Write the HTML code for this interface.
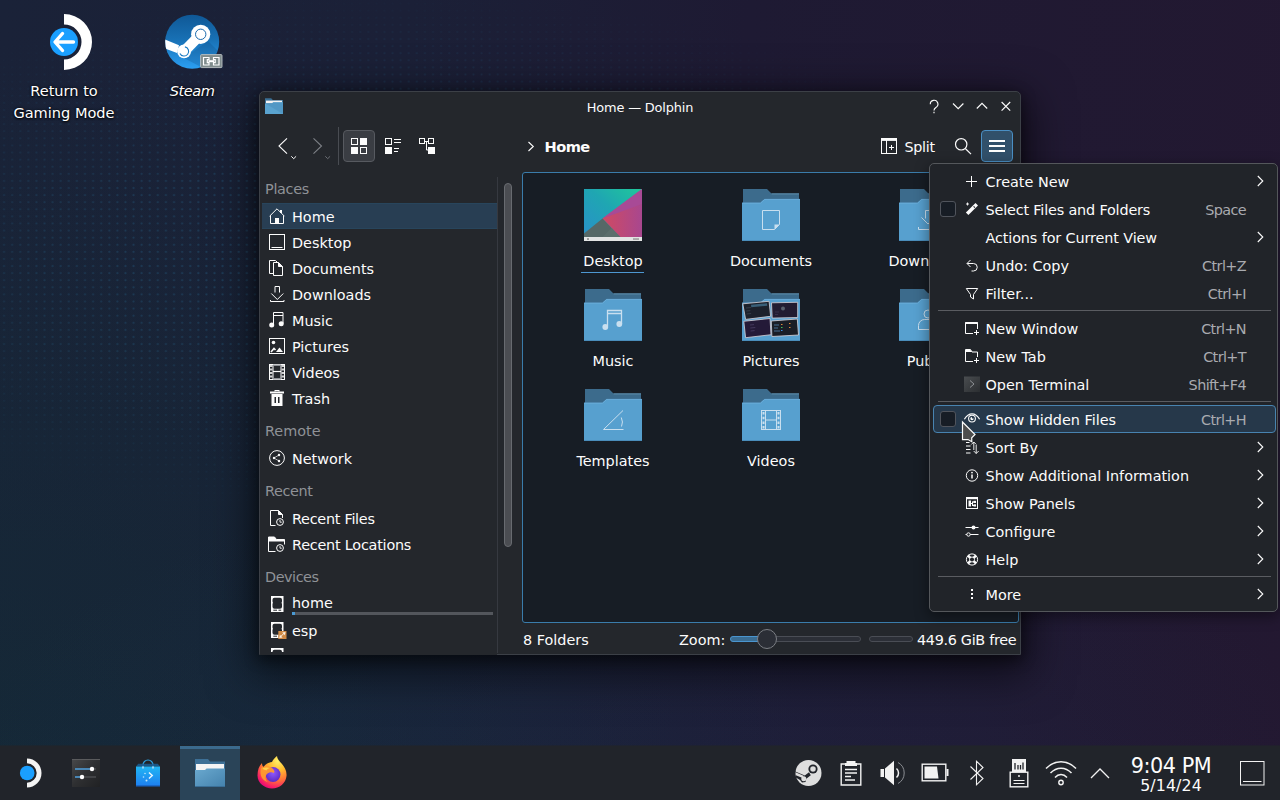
<!DOCTYPE html>
<html lang="en">
<head>
<meta charset="utf-8">
<title>Home — Dolphin</title>
<style>
html,body{margin:0;padding:0}
body{width:1280px;height:800px;overflow:hidden;position:relative;
  font-family:"DejaVu Sans","Liberation Sans",sans-serif;font-size:14.4px;color:#fcfcfc;
  background:#1a2238;-webkit-font-smoothing:antialiased}
*{box-sizing:border-box}
.a{position:absolute}
.t{position:absolute;white-space:nowrap;line-height:16px;height:16px}
svg{position:absolute;overflow:visible}
/* wallpaper */
#wall{left:0;top:0;width:1280px;height:800px;
  background:
   radial-gradient(ellipse 700px 330px at 640px 100%,rgba(25,62,100,.17) 0%,rgba(25,62,100,.1) 55%,rgba(25,62,100,0) 100%),
   radial-gradient(ellipse 800px 760px at 0% 100%,rgba(10,54,52,.34) 0%,rgba(10,54,52,.2) 45%,rgba(10,54,52,0) 100%),
   linear-gradient(96deg,#1a2238 0%,#1b2037 30%,#1e1a33 55%,#231831 100%);}
#dots{left:0;top:0;width:1280px;height:800px;opacity:.7;
  background-image:radial-gradient(circle,rgba(40,110,150,.6) 0.6px,rgba(40,110,150,0) 1.5px);
  background-size:8.1px 7.1px;
  -webkit-mask-image:radial-gradient(ellipse 640px 270px at 380px 255px,#000 0%,rgba(0,0,0,.6) 50%,rgba(0,0,0,0) 100%);
          mask-image:radial-gradient(ellipse 640px 270px at 380px 255px,#000 0%,rgba(0,0,0,.6) 50%,rgba(0,0,0,0) 100%);}
/* desktop icon labels */
.dl{position:absolute;text-align:center;line-height:22px;font-size:14.55px;color:#fff;
  text-shadow:0 1px 2px rgba(0,0,0,.9),0 0 3px rgba(0,0,0,.8)}
/* window */
#win{left:259px;top:91px;width:762px;height:564px;background:#24272c;border:1px solid #3c4047;
  border-radius:5px 5px 0 0;box-shadow:0 12px 44px 8px rgba(0,0,0,.55),0 4px 14px 1px rgba(0,0,0,.45)}
#win .t,#menu .t{color:#fcfcfc}
.hdr{color:#8f9297 !important}
.sel{left:2px;width:235px;height:26px;background:#283e53;border-top:1px solid #28455c;border-bottom:1px solid #28455c}
/* menu */
#menu{left:929px;top:163px;width:349px;height:449px;background:#212429;border:1px solid #54575b;
  border-radius:5px;box-shadow:0 4px 14px 1px rgba(0,0,0,.4)}
#menuc .sc{color:#a9abb0;text-align:right;letter-spacing:-.6px}
.sep{position:absolute;left:8px;width:333px;height:1px;background:#5a5c61}
.cb{position:absolute;width:16px;height:16px;border:1px solid #50545c;border-radius:3px;background:#171d25}
/* panel */
#panel{left:0;top:746px;width:1280px;height:54px;background:#21242a}
</style>
</head>
<body>
<div id="wall" class="a"></div>
<div id="dots" class="a"></div>

<svg style="left:36px;top:13px" width="58" height="58" viewBox="36 13 58 58"><path d="M64 14a28 28 0 0 1 0 56V59.500a17.500 17.500 0 0 0 0-35z" fill="#fff"/><circle cx="64" cy="42" r="14" fill="#1a9fff"/><path d="M73.500 42H56M62.500 33.500L55 42l7.500 8.500" fill="none" stroke="#fff" stroke-width="3.400" stroke-linecap="round" stroke-linejoin="round"/></svg>
<span class="dl" style="left:0;top:80px;width:128px">Return to<br>Gaming Mode</span>
<svg style="left:165px;top:14px" width="58" height="56" viewBox="0 0 58 56"><defs><linearGradient id="st1" x1="0" y1="0" x2="0" y2="1"><stop offset="0" stop-color="#0f5896"/><stop offset=".45" stop-color="#1870b4"/><stop offset="1" stop-color="#2b9ff2"/></linearGradient><clipPath id="stc"><circle cx="27.200" cy="27.800" r="27"/></clipPath></defs><circle cx="27.200" cy="27.800" r="27" fill="url(#st1)"/><g clip-path="url(#stc)"><path d="M43 27l20 20-12 14-32-17z" fill="#0c3f70" opacity=".22"/><path d="M-1 25.200l15 6 -2 7.800-13-4.800z" fill="#fff"/><path d="M35.700 20.300L19.100 37.400" stroke="#fff" stroke-width="10.500"/><circle cx="35.700" cy="20.300" r="9.600" fill="#fff"/><circle cx="19.100" cy="37.400" r="6.900" fill="#fff"/><circle cx="35.700" cy="20.300" r="5.200" fill="none" stroke="#1a6aac" stroke-width="1"/><path d="M19.900 32.900a4.600 4.600 0 1 1-5 6.500" fill="none" stroke="#1c7cc4" stroke-width="1.100"/></g><rect x="35.600" y="40.600" width="21.400" height="13" rx="1" fill="#7f8c8d" stroke="#bcc3c5" stroke-width=".9"/><path d="M38.500 43.500h5.500v2.200h-1.700v3h1.700v2.300h-5.500zM54 43.500h-5.500v2.200h1.700v3h-1.700v2.300H54z" fill="none" stroke="#fff" stroke-width="1.200"/><path d="M43.500 47.200h5.500" stroke="#fff" stroke-width="2"/></svg>
<span class="dl" style="left:128px;top:80px;width:128px;font-style:italic;letter-spacing:-.45px">Steam</span>

<div id="win" class="a"></div>
<div id="winc" class="a" style="left:0;top:0;width:1280px;height:655px;overflow:hidden">
<!-- titlebar -->
<svg style="left:265px;top:97px" width="18" height="17" viewBox="0 0 18 17">
  <path d="M0 1.2h6.2l1.6 1.8H18v3H0z" fill="#3a6f94"/>
  <rect x="1" y="3.6" width="16" height="3" fill="#f2f2f2"/>
  <path d="M0 6.2h7.2l1-1H18V17H0z" fill="#5aa3cf"/>
  <path d="M0 6.2h7.2l1-1H18V17z" fill="#4a8fbd" opacity=".55"/>
</svg>
<span class="t" style="left:580px;top:100px;width:120px;text-align:center;font-size:12.9px;letter-spacing:-.15px">Home — Dolphin</span>
<svg style="left:926px;top:98px" width="90" height="18" viewBox="926 98 90 18" fill="none" stroke="#fcfcfc" stroke-width="1.15">
  <path d="M930.3 104.2a3.8 3.8 0 1 1 5.6 3.2c-1.3.8-1.9 1.500-1.9 3"/>
  <path d="M934 111.800v1.4"/>
  <path d="M953 103.500l5.200 5.200 5.200-5.200"/>
  <path d="M976.800 108.500l5.200-5.200 5.200 5.200"/>
  <path d="M1001.600 102l8.600 8.600M1010.200 102l-8.600 8.600"/>
</svg>
<!-- toolbar -->
<svg style="left:270px;top:126px" width="180" height="40" viewBox="270 126 180 40" fill="none">
  <path d="M287 138.300l-8 7.700 8 7.700" stroke="#fcfcfc" stroke-width="1.1"/>
  <path d="M291.300 156.300l2.400 2.400 2.400-2.400" stroke="#fcfcfc" stroke-width="1"/>
  <path d="M313.500 138.300l8 7.700-8 7.700" stroke="#7e8187" stroke-width="1.1"/>
  <path d="M325.300 156.300l2.400 2.400 2.400-2.400" stroke="#6c6f76" stroke-width="1"/>
  <path d="M338.500 127v38" stroke="#494c52" stroke-width="1"/>
  <rect x="343.500" y="130.500" width="31" height="31" rx="3.500" fill="#3a3d43" stroke="#575a60"/>
  <!-- icons view -->
  <rect x="351.500" y="138.500" width="6" height="6" stroke="#fcfcfc"/>
  <rect x="360" y="138" width="7" height="7" fill="#fcfcfc"/>
  <rect x="351" y="147" width="7" height="7" fill="#fcfcfc"/>
  <rect x="360.500" y="147.500" width="6" height="6" stroke="#fcfcfc"/>
  <!-- details view -->
  <rect x="385.500" y="138.500" width="6" height="6" stroke="#fcfcfc"/>
  <rect x="385" y="147" width="7" height="7" fill="#fcfcfc"/>
  <path d="M394 139.500h7M394 142.500h7M394 148.500h5M394 151.500h4" stroke="#fcfcfc"/>
  <!-- tree view -->
  <rect x="419.500" y="138.500" width="5" height="5" stroke="#fcfcfc"/>
  <rect x="428.500" y="138.500" width="5" height="5" stroke="#fcfcfc"/>
  <rect x="428" y="147" width="7" height="7" fill="#fcfcfc"/>
  <path d="M424.500 141.500h4M426.500 141.500v8.500h2" stroke="#fcfcfc"/>
</svg>
<svg style="left:526px;top:140px" width="10" height="12" viewBox="526 140 10 12" fill="none" stroke="#fcfcfc" stroke-width="1.1"><path d="M528.500 142l4.800 4.500-4.800 4.500"/></svg>
<span class="t" style="left:544.500px;top:138.500px;font-weight:bold;font-size:14.6px;letter-spacing:-.55px">Home</span>
<svg style="left:880px;top:137px" width="18" height="18" viewBox="880 137 18 18" fill="none" stroke="#fcfcfc">
  <rect x="881.500" y="138.500" width="15" height="15"/><path d="M881.500 139.700h15" stroke-width="2.400"/><path d="M886.500 140v13.500"/><path d="M889 147.500h5M891.500 145v5"/>
</svg>
<span class="t" style="left:904.500px;top:138.500px;font-size:14.3px;letter-spacing:-.3px">Split</span>
<svg style="left:952px;top:136px" width="22" height="22" viewBox="952 136 22 22" fill="none" stroke="#fcfcfc" stroke-width="1.2"><circle cx="961.200" cy="144.300" r="5.700"/><path d="M965.300 148.500l5.700 5.700"/></svg>
<div class="a" style="left:981px;top:130px;width:32px;height:32px;border-radius:4px;background:#31506a;border:1px solid #4a8fc4"></div>
<div class="a" style="left:989px;top:140px;width:16px;height:2px;background:#fcfcfc;box-shadow:0 5px 0 #fcfcfc,0 10px 0 #fcfcfc"></div>
<div class="a" style="left:497px;top:177px;width:1px;height:476px;background:#363940"></div>
<div class="a" style="left:504px;top:183px;width:8px;height:364px;border-radius:4px;background:#4b4d52;border:1px solid #686b70"></div>
<span class="t hdr" style="left:265px;top:181px;letter-spacing:-.3px">Places</span>
<div class="a sel" style="left:262px;top:203px"></div>
<svg style="left:269px;top:208px" width="16" height="16" viewBox="0 0 16 16" fill="none" stroke="#fcfcfc"><path d="M.6 8.200L8 .8l7.400 7.400"/><path d="M1.500 7.500v8h13v-8"/><rect x="6" y="10" width="4" height="5.500" fill="#fcfcfc" stroke="none"/><rect x="11" y="2" width="2" height="3" fill="#fcfcfc" stroke="none"/></svg>
<span class="t" style="left:292px;top:209px">Home</span>
<svg style="left:269px;top:234px" width="16" height="16" viewBox="0 0 16 16" fill="none" stroke="#fcfcfc"><rect x=".5" y=".5" width="15" height="15"/><path d="M2.500 13.500h11"/></svg>
<span class="t" style="left:292px;top:235px">Desktop</span>
<svg style="left:269px;top:260px" width="16" height="16" viewBox="0 0 16 16" fill="none" stroke="#fcfcfc"><path d="M4.500 13.500h-4V.5h6l1.500 1.500"/><path d="M4.500 2.500h5l4 4v9h-9z" fill="#24272c"/><path d="M9.500 2.500v4h4" fill="#fcfcfc"/></svg>
<span class="t" style="left:292px;top:261px">Documents</span>
<svg style="left:269px;top:286px" width="16" height="16" viewBox="0 0 16 16" fill="none" stroke="#fcfcfc"><path d="M6 6.500V.5h4.500v6"/><path d="M2.300 7.500l6 6 6-6"/><path d="M1.500 14v1.500h13.500V14"/></svg>
<span class="t" style="left:292px;top:287px">Downloads</span>
<svg style="left:269px;top:312px" width="16" height="16" viewBox="0 0 16 16" fill="none" stroke="#fcfcfc"><path d="M4.500 12.500V.500h9.500V11.500"/><path d="M4.500 3.500h9.500"/><circle cx="2.700" cy="13" r="2.500" fill="#fcfcfc" stroke="none"/><circle cx="12.200" cy="11.800" r="2.500" fill="#fcfcfc" stroke="none"/></svg>
<span class="t" style="left:292px;top:313px">Music</span>
<svg style="left:269px;top:338px" width="16" height="16" viewBox="0 0 16 16" fill="none" stroke="#fcfcfc"><rect x=".5" y=".5" width="15" height="15"/><circle cx="4.500" cy="4.500" r="1.800" fill="#fcfcfc" stroke="none"/><path d="M7 14l3.500-4.500 3.500 4.500z" fill="#fcfcfc" stroke="none"/><path d="M2 14l3-3.500 1.500 1.500" stroke-width="1.600"/></svg>
<span class="t" style="left:292px;top:339px">Pictures</span>
<svg style="left:269px;top:364px" width="16" height="16" viewBox="0 0 16 16" fill="none" stroke="#fcfcfc"><rect x=".5" y=".5" width="15" height="15"/><path d="M4 .5v15M12 .5v15" stroke-width="1"/><path d="M2.200 1v14M13.800 1v14" stroke-width="2.400" stroke-dasharray="2 1.500" opacity=".8"/><path d="M4 1.200h8M4 14.800h8" stroke="#8f9297" stroke-width="1.400"/><path d="M4 7.500h8" stroke-width="1.200"/></svg>
<span class="t" style="left:292px;top:365px">Videos</span>
<svg style="left:269px;top:390px" width="16" height="16" viewBox="0 0 16 16" fill="#fcfcfc"><path d="M5.500 0h5v1.500h-1v-.5h-3v.5h-1z"/><rect x="1" y="1.500" width="14" height="2"/><path d="M2.500 4h11v12h-11zM5.500 7v6h1.500V7zM9 7v6h1.500V7z" fill-rule="evenodd"/></svg>
<span class="t" style="left:292px;top:391px">Trash</span>
<span class="t hdr" style="left:265px;top:423px">Remote</span>
<svg style="left:269px;top:450px" width="16" height="16" viewBox="0 0 16 16" fill="none" stroke="#fcfcfc"><circle cx="8" cy="8" r="7.400"/><circle cx="5" cy="8" r="1.200" fill="#fcfcfc" stroke="none"/><circle cx="10" cy="5" r="1.200" fill="#fcfcfc" stroke="none"/><circle cx="10" cy="11" r="1.200" fill="#fcfcfc" stroke="none"/><path d="M10 5L5 8l5 3" stroke-width=".7"/></svg>
<span class="t" style="left:292px;top:451px">Network</span>
<span class="t hdr" style="left:265px;top:483px;letter-spacing:-.35px">Recent</span>
<svg style="left:269px;top:510px" width="16" height="16" viewBox="0 0 16 16" fill="none" stroke="#fcfcfc"><path d="M6.500 15.500h-5V.5h8l4 4v3.500"/><path d="M9.500.5v4h4" fill="#fcfcfc"/><circle cx="11" cy="12" r="3.400"/><path d="M11 10v2.200h1.800" stroke-width=".9"/></svg>
<span class="t" style="left:292px;top:511px;letter-spacing:-.27px">Recent Files</span>
<svg style="left:268px;top:536px" width="17" height="16" viewBox="0 0 17 16" fill="none" stroke="#fcfcfc"><path d="M.5 1h6l2 2.500h8V5H.5z" fill="#fcfcfc"/><path d="M7.500 15.500h-7V4M16.500 5v3.500"/><circle cx="12" cy="12" r="3.400"/><path d="M12 10v2.200h1.800" stroke-width=".9"/></svg>
<span class="t" style="left:292px;top:537px;letter-spacing:-.22px">Recent Locations</span>
<span class="t hdr" style="left:265px;top:569px;letter-spacing:-.45px">Devices</span>
<svg style="left:270.700px;top:596px" width="13" height="16" viewBox="0 0 13 16"><rect x="0" y="0" width="12.500" height="16" fill="#fcfcfc"/><path d="M3.500 1.800h5.500q2 0 2 2v1.700q-.9 1.300 0 2.600v2.600q0 2-2 2h-5.500q-2 0-2-2v-2.600q.9-1.300 0-2.600v-1.700q0-2 2-2z" fill="#24272c"/><path d="M2.300 14.200h3.700M7.500 14.200h2.700" stroke="#24272c" stroke-width="1"/></svg>
<span class="t" style="left:292px;top:595px">home</span>
<div class="a" style="left:292px;top:612px;width:201px;height:3px;background:#53565c"></div>
<div class="a" style="left:292px;top:612px;width:3px;height:3px;background:#4a9ad4"></div>
<svg style="left:270.700px;top:622px" width="16" height="18" viewBox="0 0 16 18"><rect x="0" y="0" width="12.500" height="16" fill="#fcfcfc"/><path d="M3.500 1.800h5.500q2 0 2 2v1.700q-.9 1.300 0 2.600v2.600q0 2-2 2h-5.500q-2 0-2-2v-2.600q.9-1.300 0-2.600v-1.700q0-2 2-2z" fill="#24272c"/><path d="M2.300 14.200h3.700M7.500 14.200h2.700" stroke="#24272c" stroke-width="1"/><rect x="7.300" y="9" width="8.200" height="8" fill="#d08a45"/><path d="M14.500 10l-3.300.6 2.700 2.700zM8.300 16l3.300-.6-2.700-2.700z" fill="#fbefe2"/><path d="M9.800 14.500l3.200-3.200" stroke="#fbefe2" stroke-width="1"/></svg>
<span class="t" style="left:292px;top:623px">esp</span>
<svg style="left:270.700px;top:648px" width="13" height="16" viewBox="0 0 13 16"><rect x="0" y="0" width="12.500" height="16" fill="#fcfcfc"/><path d="M3.500 1.800h5.500q2 0 2 2v1.700q-.9 1.300 0 2.600v2.600q0 2-2 2h-5.500q-2 0-2-2v-2.600q.9-1.300 0-2.600v-1.700q0-2 2-2z" fill="#24272c"/><path d="M2.300 14.200h3.700M7.500 14.200h2.700" stroke="#24272c" stroke-width="1"/></svg>
<span class="t" style="left:292px;top:651.500px">rootfs</span>
<div class="a" style="left:260px;top:652px;width:237px;height:2.500px;background:#24272c"></div>

<div class="a" style="left:522px;top:172px;width:497px;height:451px;background:#171d25;border:1px solid #3a7cab;border-radius:3px"></div>
<svg style="left:584px;top:189px" width="58" height="52" viewBox="0 0 58 52"><defs><linearGradient id="dg1" x1="0" y1="1" x2="1" y2="0"><stop offset="0" stop-color="#2a8fcb"/><stop offset=".55" stop-color="#1fa6b2"/><stop offset="1" stop-color="#1fc89a"/></linearGradient><linearGradient id="dg2" x1="0" y1="0" x2="1" y2="0"><stop offset="0" stop-color="#d04a62"/><stop offset="1" stop-color="#a8478f"/></linearGradient></defs><rect width="58" height="52" fill="url(#dg1)"/><path d="M58 0L18.500 29.500 40 52h18z" fill="url(#dg2)"/><path d="M58 0L18.500 29.500 58 15z" fill="#a84a96"/><path d="M0 44.500l18.500-15L40 52H0z" fill="#566867"/><path d="M18.500 48l9-9 9 9z" fill="#607370" opacity=".6"/><rect y="48" width="58" height="4" fill="#e3e4e4"/><rect x="3" y="49.300" width="2" height="1.500" fill="#888"/><rect x="49" y="49.300" width="6" height="1.500" fill="#999"/></svg>
<span class="t" style="left:543px;top:253px;width:140px;text-align:center">Desktop</span>
<svg style="left:742px;top:189px" width="58" height="52" viewBox="0 0 58 52"><path d="M1 0h24l4.500 4.400H57V16H1z" fill="#3c6b8c"/><path d="M0 13.700h18.300l4.200-3.800H58V52H0z" fill="#57a0cf"/><path d="M29.500 4.900H57" stroke="#5f8fae" stroke-width="1" fill="none"/><path d="M0 14.200h18.500l4.200-3.800H58" stroke="#68abd8" stroke-width="1" fill="none"/><path d="M0 51.500h58" stroke="#4a8dbb" stroke-width="1" fill="none"/><path d="M20.500 21.500h17v14l-5 5h-12z" fill="none" stroke="#c9dfef"/><path d="M37.500 35.500h-5v5z" fill="#c9dfef"/></svg>
<span class="t" style="left:701px;top:253px;width:140px;text-align:center">Documents</span>
<svg style="left:899px;top:189px" width="58" height="52" viewBox="0 0 58 52"><path d="M1 0h24l4.500 4.400H57V16H1z" fill="#3c6b8c"/><path d="M0 13.700h18.300l4.200-3.800H58V52H0z" fill="#57a0cf"/><path d="M29.500 4.900H57" stroke="#5f8fae" stroke-width="1" fill="none"/><path d="M0 14.200h18.500l4.200-3.800H58" stroke="#68abd8" stroke-width="1" fill="none"/><path d="M0 51.500h58" stroke="#4a8dbb" stroke-width="1" fill="none"/><path d="M26.500 29.500v-8h5v8M22.500 28.500l6.500 6.500 6.500-6.500M19.500 38v2.500h19V38" fill="none" stroke="#c9dfef"/></svg>
<span class="t" style="left:858px;top:253px;width:140px;text-align:center">Downloads</span>
<svg style="left:584px;top:289px" width="58" height="52" viewBox="0 0 58 52"><path d="M1 0h24l4.500 4.400H57V16H1z" fill="#3c6b8c"/><path d="M0 13.700h18.300l4.200-3.800H58V52H0z" fill="#57a0cf"/><path d="M29.500 4.900H57" stroke="#5f8fae" stroke-width="1" fill="none"/><path d="M0 14.200h18.500l4.200-3.800H58" stroke="#68abd8" stroke-width="1" fill="none"/><path d="M0 51.500h58" stroke="#4a8dbb" stroke-width="1" fill="none"/><path d="M23.500 37V21.500h14V35M23.500 24.500h14" fill="none" stroke="#c9dfef" stroke-width="1.300"/><circle cx="21.300" cy="38" r="2.900" fill="#c9dfef"/><circle cx="35.300" cy="35" r="2.900" fill="#c9dfef"/></svg>
<span class="t" style="left:543px;top:353px;width:140px;text-align:center">Music</span>
<svg style="left:742px;top:289px" width="58" height="52" viewBox="0 0 58 52"><path d="M1 0h24l4.500 4.400H57V16H1z" fill="#3c6b8c"/><path d="M0 13.700h18.300l4.200-3.800H58V52H0z" fill="#57a0cf"/><path d="M29.500 4.900H57" stroke="#5f8fae" stroke-width="1" fill="none"/><path d="M0 14.200h18.500l4.200-3.800H58" stroke="#68abd8" stroke-width="1" fill="none"/><path d="M0 51.500h58" stroke="#4a8dbb" stroke-width="1" fill="none"/><g stroke="#d9d3d8" stroke-width=".8"><path d="M.8 14.800l26.300-2.500 1.500 15-25 3.100z" fill="#1c212b"/><path d="M29.500 13.800l26.200-.5v15.200l-25.500.6z" fill="#221c31"/><path d="M1.800 32.300L28 29.500l1 16.200-25.400 3z" fill="#241a38"/><path d="M29.300 32l26-2 1.200 16-26.600 1.500z" fill="#1a1e26"/></g><path d="M9 15.800l16-1.500.3 2.400-16 1.600z" fill="#3f6b86" opacity=".85"/><path d="M4 19l5-.5M4.300 22l4-.4M4.600 25l4.500-.5" stroke="#39424f" stroke-width=".8"/><circle cx="41" cy="19.500" r="2" fill="#59606c"/><path d="M33 23h4M33 25.500h3" stroke="#3a3550" stroke-width=".8"/><path d="M8 36l4-.4M8.300 39l5-.5M8.600 42l4-.4" stroke="#4b3f66" stroke-width=".8"/><path d="M32 36h5M32 39h4M32 42h6" stroke="#4d78a0" stroke-width=".9"/><path d="M39 35.500h1.500M47 34.500h1.500M47 38.500h1.500" stroke="#e0893a" stroke-width="1.200"/><path d="M39 38.500h1.500" stroke="#3fbf5a" stroke-width="1.200"/><path d="M39 41.500h1.500" stroke="#3d8ee0" stroke-width="1.200"/></svg>
<span class="t" style="left:701px;top:353px;width:140px;text-align:center">Pictures</span>
<svg style="left:899px;top:289px" width="58" height="52" viewBox="0 0 58 52"><path d="M1 0h24l4.500 4.400H57V16H1z" fill="#3c6b8c"/><path d="M0 13.700h18.300l4.200-3.800H58V52H0z" fill="#57a0cf"/><path d="M29.500 4.900H57" stroke="#5f8fae" stroke-width="1" fill="none"/><path d="M0 14.200h18.500l4.200-3.800H58" stroke="#68abd8" stroke-width="1" fill="none"/><path d="M0 51.500h58" stroke="#4a8dbb" stroke-width="1" fill="none"/><circle cx="29" cy="25" r="4" fill="none" stroke="#c9dfef"/><path d="M19.500 40.500v-4a6 6 0 0 1 6-6h7a6 6 0 0 1 6 6v4z" fill="none" stroke="#c9dfef"/></svg>
<span class="t" style="left:858px;top:353px;width:140px;text-align:center">Public</span>
<svg style="left:584px;top:389px" width="58" height="52" viewBox="0 0 58 52"><path d="M1 0h24l4.500 4.400H57V16H1z" fill="#3c6b8c"/><path d="M0 13.700h18.300l4.200-3.800H58V52H0z" fill="#57a0cf"/><path d="M29.500 4.900H57" stroke="#5f8fae" stroke-width="1" fill="none"/><path d="M0 14.200h18.500l4.200-3.800H58" stroke="#68abd8" stroke-width="1" fill="none"/><path d="M0 51.500h58" stroke="#4a8dbb" stroke-width="1" fill="none"/><path d="M39.500 40.500H19.500L39 21.500" fill="none" stroke="#c9dfef"/><path d="M37.300 28.500q2.200 4.500 .2 9" fill="none" stroke="#c9dfef"/></svg>
<span class="t" style="left:543px;top:453px;width:140px;text-align:center">Templates</span>
<svg style="left:742px;top:389px" width="58" height="52" viewBox="0 0 58 52"><path d="M1 0h24l4.500 4.400H57V16H1z" fill="#3c6b8c"/><path d="M0 13.700h18.300l4.200-3.800H58V52H0z" fill="#57a0cf"/><path d="M29.500 4.900H57" stroke="#5f8fae" stroke-width="1" fill="none"/><path d="M0 14.200h18.500l4.200-3.800H58" stroke="#68abd8" stroke-width="1" fill="none"/><path d="M0 51.500h58" stroke="#4a8dbb" stroke-width="1" fill="none"/><rect x="19.500" y="21.500" width="19" height="19" fill="none" stroke="#c9dfef"/><path d="M23.500 21.500v19M34.500 21.500v19M23.500 31h11" fill="none" stroke="#c9dfef"/><path d="M21.500 23v17M36.500 23v17" stroke="#c9dfef" stroke-width="2" stroke-dasharray="2.500 2.200" fill="none"/></svg>
<span class="t" style="left:701px;top:453px;width:140px;text-align:center">Videos</span>
<div class="a" style="left:581px;top:271.500px;width:63px;height:1.500px;background:#4d97d1"></div>

<span class="t" style="left:523px;top:632px">8 Folders</span>
<span class="t" style="left:679px;top:632px">Zoom:</span>
<div class="a" style="left:730px;top:636px;width:131px;height:6px;border-radius:3px;background:#2c2f37;border:1px solid #4a4d55"></div>
<div class="a" style="left:730px;top:636px;width:36px;height:6px;border-radius:3px 0 0 3px;background:#3a6d93;border:1px solid #4a95cf"></div>
<div class="a" style="left:757px;top:629px;width:20px;height:20px;border-radius:10px;background:#2b2e36;border:1px solid #7b7e84"></div>
<div class="a" style="left:869px;top:636px;width:44px;height:6px;border-radius:3px;background:#2c2f37;border:1px solid #4a4d55"></div>
<span class="t" style="left:917px;top:632px;letter-spacing:-.32px">449.6 GiB free</span>

</div>

<div id="menu" class="a"></div>
<div id="menuc" class="a" style="left:0;top:0;width:1280px;height:800px">
<div class="a" style="left:933px;top:405px;width:343px;height:28px;border-radius:4px;background:#26384a;border:1px solid #4883b0"></div>
<div class="sep" style="left:938px;top:310px;width:333px"></div>
<div class="sep" style="left:938px;top:401px;width:333px"></div>
<div class="sep" style="left:938px;top:576px;width:333px"></div>
<svg style="left:964px;top:173px" width="16" height="16" viewBox="0 0 16 16"><path d="M7.500 3v11M2 8.500h11" stroke="#fcfcfc" fill="none"/></svg>
<span class="t" style="left:985.5px;top:174px">Create New</span>
<svg style="left:1256px;top:175px" width="9" height="12" viewBox="0 0 9 12"><path d="M1.800 1l5 5-5 5" stroke="#fcfcfc" stroke-width="1.100" fill="none"/></svg>
<div class="cb" style="left:940px;top:201px"></div>
<svg style="left:964px;top:201px" width="16" height="16" viewBox="0 0 16 16"><path d="M1.900 11.400L11.500 2 14 4.500 4.400 13.900z" fill="#fcfcfc"/><path d="M9.600 5.300l1.300 1.300" stroke="#212429" stroke-width="1.100"/><path d="M3.500 1.500v3M2 3h3" stroke="#fcfcfc" stroke-width=".9" fill="none"/></svg>
<span class="t" style="left:985.5px;top:202px;letter-spacing:-.17px">Select Files and Folders</span>
<span class="t sc" style="left:1096px;width:150px;top:202px">Space</span>
<span class="t" style="left:985.5px;top:230px;letter-spacing:-.12px">Actions for Current View</span>
<svg style="left:1256px;top:231px" width="9" height="12" viewBox="0 0 9 12"><path d="M1.800 1l5 5-5 5" stroke="#fcfcfc" stroke-width="1.100" fill="none"/></svg>
<svg style="left:964px;top:257px" width="16" height="16" viewBox="0 0 16 16"><path d="M3.200 6.500h6.300a3.700 3.700 0 0 1 0 7.500H7.500" stroke="#fcfcfc" fill="none"/><path d="M6.500 3l-3.500 3.500 3.500 3.500" stroke="#fcfcfc" fill="none"/></svg>
<span class="t" style="left:985.5px;top:258px">Undo: Copy</span>
<span class="t sc" style="left:1096px;width:150px;top:258px">Ctrl+Z</span>
<svg style="left:964px;top:285px" width="16" height="16" viewBox="0 0 16 16"><path d="M2.300 3.500h11.400l-4.200 6v4.500l-3-2v-2.500z" stroke="#fcfcfc" fill="none" stroke-linejoin="round"/></svg>
<span class="t" style="left:985.5px;top:286px">Filter...</span>
<span class="t sc" style="left:1096px;width:150px;top:286px">Ctrl+I</span>
<svg style="left:964px;top:320px" width="16" height="16" viewBox="0 0 16 16"><path d="M9 13.500H1.500v-11h12V9" stroke="#fcfcfc" fill="none"/><path d="M1.500 3h12" stroke="#fcfcfc" stroke-width="2" fill="none"/><path d="M12.500 10v5M10 12.500h5" stroke="#fcfcfc" fill="none"/></svg>
<span class="t" style="left:985.5px;top:321px">New Window</span>
<span class="t sc" style="left:1096px;width:150px;top:321px">Ctrl+N</span>
<svg style="left:964px;top:348px" width="16" height="16" viewBox="0 0 16 16"><path d="M9 13.500H1.500v-12h5l1.500 2.500h5.500V9" stroke="#fcfcfc" fill="none"/><path d="M2 2h4.500l1.500 2H2z" fill="#fcfcfc"/><path d="M12.500 10v5M10 12.500h5" stroke="#fcfcfc" fill="none"/></svg>
<span class="t" style="left:985.5px;top:349px">New Tab</span>
<span class="t sc" style="left:1096px;width:150px;top:349px">Ctrl+T</span>
<svg style="left:964px;top:376px" width="16" height="16" viewBox="0 0 16 16"><defs><linearGradient id="tg" x1="0" y1="0" x2="1" y2="1"><stop offset="0" stop-color="#4a4d50"/><stop offset="1" stop-color="#2b2e31"/></linearGradient></defs><rect x="0" y=".5" width="16" height="15.500" fill="url(#tg)"/><path d="M6 4.500l4 3.500-4 3.500" stroke="#8d9094" fill="none"/></svg>
<span class="t" style="left:985.5px;top:377px">Open Terminal</span>
<span class="t sc" style="left:1096px;width:150px;top:377px">Shift+F4</span>
<div class="cb" style="left:940px;top:411px"></div>
<svg style="left:964px;top:411px" width="16" height="16" viewBox="0 0 16 16"><path d="M.4 8.300C2.800 4.300 5.400 2.900 8 2.900s5.200 1.400 7.600 5.400" stroke="#fcfcfc" stroke-width="1.200" fill="none"/><circle cx="8" cy="7.600" r="3.400" stroke="#fcfcfc" stroke-width="1.100" fill="none"/><path d="M8 7.600V5.900a1.700 1.700 0 1 0 1.700 1.700z" fill="#fcfcfc"/></svg>
<span class="t" style="left:985.5px;top:412px">Show Hidden Files</span>
<span class="t sc" style="left:1096px;width:150px;top:412px">Ctrl+H</span>
<svg style="left:964px;top:439px" width="16" height="16" viewBox="0 0 16 16"><path d="M2 3.500h3.500M2 7h4.500M2 10.500h4.500M2 14h4.500" stroke="#fcfcfc" fill="none"/><path d="M9.800 11V3M7.300 5.500L9.800 3l2.500 2.500M12.200 6v8.500M9.700 12l2.500 2.500 2.500-2.500" stroke="#fcfcfc" stroke-width=".9" fill="none"/></svg>
<span class="t" style="left:985.5px;top:440px">Sort By</span>
<svg style="left:1256px;top:441px" width="9" height="12" viewBox="0 0 9 12"><path d="M1.800 1l5 5-5 5" stroke="#fcfcfc" stroke-width="1.100" fill="none"/></svg>
<svg style="left:964px;top:467px" width="16" height="16" viewBox="0 0 16 16"><circle cx="8" cy="8.500" r="5.700" stroke="#fcfcfc" fill="none"/><path d="M8 7.500v4" stroke="#fcfcfc" stroke-width="1.500" fill="none"/><circle cx="8" cy="5.600" r=".9" fill="#fcfcfc"/></svg>
<span class="t" style="left:985.5px;top:468px">Show Additional Information</span>
<svg style="left:1256px;top:469px" width="9" height="12" viewBox="0 0 9 12"><path d="M1.800 1l5 5-5 5" stroke="#fcfcfc" stroke-width="1.100" fill="none"/></svg>
<svg style="left:964px;top:495px" width="16" height="16" viewBox="0 0 16 16"><rect x="2.500" y="2.500" width="11" height="11" stroke="#fcfcfc" fill="none"/><path d="M2.500 3.200h11" stroke="#fcfcfc" stroke-width="2"/><path d="M4.500 5.500v6h2.500v-6z" fill="#fcfcfc"/><path d="M7 8.500h1.500M8.500 7h2M8.500 10.500h2M8.500 6.500v4.500" stroke="#fcfcfc" stroke-width="1" fill="none"/><rect x="9.500" y="5.800" width="2.500" height="2.200" fill="#fcfcfc"/><rect x="9.500" y="9.300" width="2.500" height="2.200" fill="#fcfcfc"/></svg>
<span class="t" style="left:985.5px;top:496px">Show Panels</span>
<svg style="left:1256px;top:497px" width="9" height="12" viewBox="0 0 9 12"><path d="M1.800 1l5 5-5 5" stroke="#fcfcfc" stroke-width="1.100" fill="none"/></svg>
<svg style="left:964px;top:523px" width="16" height="16" viewBox="0 0 16 16"><path d="M1.500 4.500h13M1.500 11.500h13" stroke="#fcfcfc" fill="none"/><circle cx="9.500" cy="4.500" r="2" fill="#fcfcfc"/><circle cx="4.500" cy="11.500" r="1.700" fill="#24272c" stroke="#fcfcfc"/></svg>
<span class="t" style="left:985.5px;top:524px">Configure</span>
<svg style="left:1256px;top:525px" width="9" height="12" viewBox="0 0 9 12"><path d="M1.800 1l5 5-5 5" stroke="#fcfcfc" stroke-width="1.100" fill="none"/></svg>
<svg style="left:964px;top:551px" width="16" height="16" viewBox="0 0 16 16"><circle cx="8" cy="8.500" r="5.600" stroke="#fcfcfc" stroke-width="1" fill="none"/><circle cx="8" cy="8.500" r="2.500" stroke="#fcfcfc" stroke-width="1" fill="none"/><path d="M3.900 4.400l2.400 2.400M12.100 4.400L9.700 6.800M3.900 12.600l2.400-2.400M12.100 12.600l-2.400-2.400" stroke="#fcfcfc" stroke-width="2.600" fill="none"/></svg>
<span class="t" style="left:985.5px;top:552px">Help</span>
<svg style="left:1256px;top:553px" width="9" height="12" viewBox="0 0 9 12"><path d="M1.800 1l5 5-5 5" stroke="#fcfcfc" stroke-width="1.100" fill="none"/></svg>
<svg style="left:964px;top:586px" width="16" height="16" viewBox="0 0 16 16"><rect x="7" y="3" width="2" height="2" fill="#fcfcfc"/><rect x="7" y="7" width="2" height="2" fill="#fcfcfc"/><rect x="7" y="11" width="2" height="2" fill="#fcfcfc"/></svg>
<span class="t" style="left:985.5px;top:587px">More</span>
<svg style="left:1256px;top:588px" width="9" height="12" viewBox="0 0 9 12"><path d="M1.800 1l5 5-5 5" stroke="#fcfcfc" stroke-width="1.100" fill="none"/></svg>
<svg style="left:955px;top:415px" width="30" height="34" viewBox="955 415 30 34"><path d="M962.500 422L975 434.500l-3.300 3.300.100 4-3.800-2.200h-5.500z" fill="#4d4d4d" stroke="#fbfbfb" stroke-width="1.200" stroke-linejoin="miter"/></svg>
</div>

<div id="panel" class="a"></div>
<div class="a" style="left:0;top:745px;width:1280px;height:1px;background:rgba(33,36,42,.55)"></div>
<div class="a" style="left:180px;top:746px;width:60px;height:54px;background:#2a4458"></div>
<div class="a" style="left:180px;top:746px;width:60px;height:3px;background:#3b6a8d"></div>
<!-- launcher: steam deck logo -->
<svg style="left:16px;top:756px" width="30" height="34" viewBox="16 756 30 34"><path d="M27 758.500a14.500 14.500 0 0 1 0 29v-4.800a9.700 9.700 0 0 0 0-19.400z" fill="#f4f4f4"/><circle cx="27.200" cy="773" r="7.300" fill="#1a9fff"/></svg>
<!-- settings -->
<svg style="left:72px;top:759px" width="28" height="28" viewBox="0 0 28 28"><defs><linearGradient id="sg" x1="0" y1="0" x2="1" y2="1"><stop offset="0" stop-color="#48494b"/><stop offset=".5" stop-color="#2e2f31"/><stop offset="1" stop-color="#202123"/></linearGradient></defs><rect width="28" height="28" fill="url(#sg)"/><rect width="28" height="1" fill="#5a5b5d"/><path d="M3 10h21M3 18h21" stroke="#4c4d50" stroke-width="1.600"/><path d="M3 10h15M3 18h6" stroke="#4b9bd8" stroke-width="1.600"/><circle cx="20" cy="10" r="2.200" fill="#fff"/><circle cx="10" cy="18" r="2.200" fill="#fff"/></svg>
<!-- discover -->
<svg style="left:135px;top:758px" width="26" height="30" viewBox="0 0 26 30"><defs><linearGradient id="bg1" x1="0" y1="0" x2="0" y2="1"><stop offset="0" stop-color="#21b6f4"/><stop offset="1" stop-color="#1e7ff0"/></linearGradient></defs><path d="M8 9V7a5 5 0 0 1 10 0v2" fill="none" stroke="#2c9fe0" stroke-width="1.200"/><path d="M1 8.500l2.200-2.700h19.600L25 8.500z" fill="#1b5f96" opacity=".85"/><path d="M1 8.500h24v19.500H1z" fill="url(#bg1)"/><rect x="1" y="27" width="24" height="1.500" fill="#1867c9"/><rect x="7" y="8.500" width="2" height="2" fill="#9bd3f5"/><rect x="17" y="8.500" width="2" height="2" fill="#9bd3f5"/><path d="M14 14.500l3.200 3-3.200 3" fill="none" stroke="#e9f6ff" stroke-width="1.500"/><circle cx="10" cy="15.500" r=".8" fill="#bfe6fb"/><circle cx="8.500" cy="19" r=".8" fill="#bfe6fb"/><circle cx="11.500" cy="22.500" r="1" fill="#bfe6fb"/></svg>
<!-- dolphin -->
<svg style="left:194px;top:759px" width="32" height="28" viewBox="0 0 32 28"><defs><linearGradient id="fg1" x1="0" y1="0" x2="1" y2="1"><stop offset="0" stop-color="#6aa9cf"/><stop offset="1" stop-color="#4482ad"/></linearGradient></defs><path d="M1 0h13l2 2.500h15V12H1z" fill="#3d7096"/><rect x="2" y="5" width="28" height="6" fill="#f4f4f4"/><path d="M1 11h10l1.500-1.500H31V28H1z" fill="url(#fg1)"/><rect x="1" y="27" width="30" height="1" fill="#3a6f97"/></svg>
<!-- firefox -->
<svg style="left:256px;top:756px" width="32" height="33" viewBox="0 0 32 33"><defs><radialGradient id="ff1" cx=".7" cy=".15" r="1"><stop offset="0" stop-color="#fff36b"/><stop offset=".3" stop-color="#ffbd2e"/><stop offset=".6" stop-color="#ff7139"/><stop offset=".85" stop-color="#f5156c"/><stop offset="1" stop-color="#c60084"/></radialGradient><radialGradient id="ff2" cx=".5" cy=".4" r=".6"><stop offset="0" stop-color="#9059ff"/><stop offset="1" stop-color="#5b2bc4"/></radialGradient></defs><path d="M16 6c1-2.500 3-4.500 5-6 0 3 2.500 5 5 8s5 7 4.500 12c-.6 7-7 12.500-14.500 12.500S1.500 27 1.500 19.500C1.500 14 3 10 6 7c0 2 .5 3 1.500 4 2-3 5-4.500 8.500-5z" fill="url(#ff1)"/><circle cx="17" cy="18.500" r="7.500" fill="url(#ff2)"/><path d="M5 12c3-2 8-2.500 11 0 2 1.500 3 3.500 2 5-2-1-5-1-7 1s-2 6 1 8c-5-1-9-6-7-14z" fill="#ff9a2e" opacity=".95"/><path d="M6.500 12.500c2-1 5-1.500 7.500-.500-2 .5-3 1.500-3.500 2.500-1.500-.5-3-1-4-2z" fill="#ffd04a"/></svg>
<!-- steam tray -->
<svg style="left:795px;top:760px" width="27" height="27" viewBox="0 0 27 27"><circle cx="13.500" cy="13" r="13" fill="#dedede"/><circle cx="18" cy="9" r="4.600" fill="#21242a"/><circle cx="18" cy="9" r="2.800" fill="#dedede"/><circle cx="18" cy="9" r="2.800" fill="none" stroke="#21242a" stroke-width=".1"/><path d="M.3 11.500l9.500 4 4.200-3.300 1.800 3-4.500 3.500-.8 3.300-3.500.5-2-2.500L.8 17.500z" fill="#21242a"/><circle cx="8.800" cy="18.800" r="2.500" fill="#dedede"/><path d="M.6 12.300l8 3.400-1 2.400-6.800-2.800z" fill="#dedede"/></svg>
<!-- clipboard -->
<svg style="left:840px;top:760px" width="22" height="26" viewBox="0 0 22 26" fill="none" stroke="#f2f2f2"><path d="M6 4H1.200v21h19.600V4H16" stroke-width="1.400"/><path d="M6.500 1h9v2h1.500v3H5V3h1.500z" fill="#f2f2f2" stroke="none"/><path d="M5 9.500h12M5 13h12M5 16.500h6M5 20h10" stroke-width="1.300"/></svg>
<!-- volume -->
<svg style="left:880px;top:760px" width="26" height="26" viewBox="0 0 26 26" fill="none"><rect x=".5" y="9" width="3.500" height="8" fill="#f2f2f2"/><path d="M5 8.500L14 .800V25.200L5 17.500z" fill="#f2f2f2"/><path d="M16.500 8.500a6 6 0 0 1 0 9" stroke="#f2f2f2" stroke-width="1.500"/><path d="M18 2.500a12 12 0 0 1 0 21" stroke="#8b8e93" stroke-width="1"/></svg>
<!-- battery -->
<svg style="left:921px;top:763px" width="28" height="19" viewBox="0 0 28 19" fill="none"><rect x="1.200" y="1.200" width="23.600" height="16.600" stroke="#f2f2f2" stroke-width="1.400"/><rect x="25.500" y="6" width="2" height="7" fill="#f2f2f2"/><path d="M3.500 3.500h12.500l1.500 12H3.500z" fill="#f2f2f2"/></svg>
<!-- bluetooth -->
<svg style="left:969px;top:760px" width="16" height="26" viewBox="0 0 16 26" fill="none" stroke="#f2f2f2" stroke-width="1.100"><path d="M1.500 6.500l12.500 12L7.500 24.800V1.200L14 7.500 1.500 19.500"/></svg>
<!-- usb drive -->
<svg style="left:1009px;top:758px" width="20" height="30" viewBox="0 0 20 30" fill="none"><rect x="3" y="1" width="14" height="13" fill="#f2f2f2"/><path d="M6 5v6.500M9 7v4.500M11.500 7v4.500M14 4.500v7" stroke="#21242a" stroke-width="1.300"/><rect x="1.200" y="14.200" width="17.600" height="14.600" stroke="#f2f2f2" stroke-width="1.400"/><path d="M4.500 22.500h11M4.500 25.500h11" stroke="#f2f2f2" stroke-width="1.200"/><circle cx="10" cy="18" r="1" fill="#f2f2f2"/></svg>
<!-- wifi -->
<svg style="left:1045px;top:760px" width="32" height="27" viewBox="0 0 32 27" fill="none" stroke="#f2f2f2" stroke-width="1.500"><path d="M1 8.500C9.500-.5 22.500-.5 31 8.500"/><path d="M5.500 13C11.500 6.500 20.500 6.500 26.500 13"/><path d="M10 17.500c3.500-4 8.500-4 12 0"/><circle cx="16" cy="22.500" r="2.200" stroke-width="1.400"/></svg>
<!-- expander -->
<svg style="left:1090px;top:767px" width="20" height="12" viewBox="0 0 20 12" fill="none" stroke="#f2f2f2" stroke-width="1.300"><path d="M1 11l9-9 9 9"/></svg>
<!-- clock -->
<span class="t" style="left:1121px;top:754px;width:100px;text-align:center;font-size:20.800px;line-height:24px;height:24px;letter-spacing:-.5px">9:04 PM</span>
<span class="t" style="left:1121px;top:776px;width:100px;text-align:center;font-size:15.800px;line-height:20px;height:20px;letter-spacing:.1px">5/14/24</span>
<!-- show desktop -->
<svg style="left:1240px;top:761px" width="25" height="25" viewBox="0 0 25 25" fill="none" stroke="#f2f2f2"><rect x=".5" y=".5" width="23.500" height="23.500"/><path d="M3 20.500h18.500"/></svg>


</body>
</html>
